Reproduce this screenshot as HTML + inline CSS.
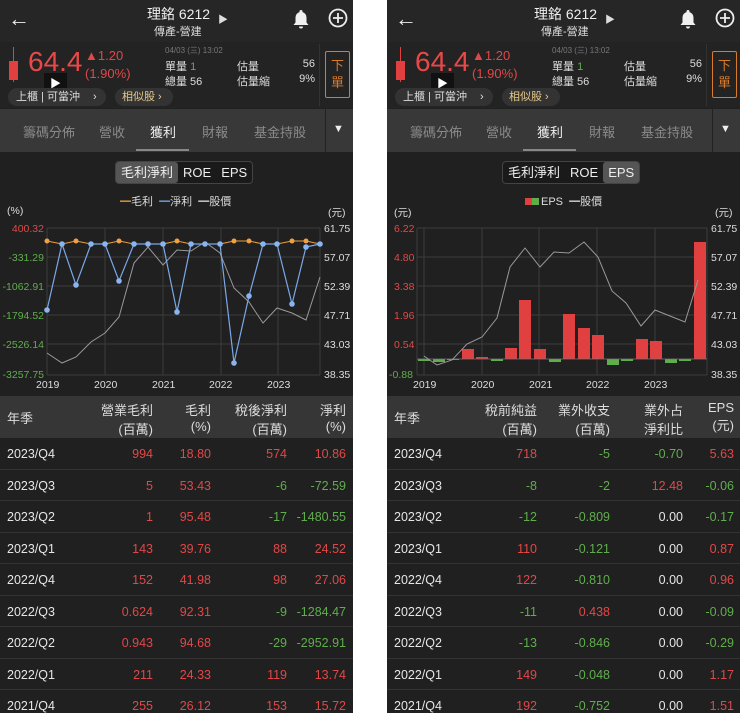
<!DOCTYPE html>
<html><head><meta charset="utf-8"><style>
*{margin:0;padding:0;box-sizing:border-box}
body{width:740px;height:713px;background:#fff;position:relative;overflow:hidden;font-family:"Liberation Sans","Noto Sans CJK TC",sans-serif;color:#ddd}
.ph{position:absolute;top:0;width:353px;height:713px;background:#202020;overflow:hidden}
.a{position:absolute;white-space:nowrap}
.top{position:absolute;left:0;top:0;width:353px;height:42px;background:#262626}
.quote{position:absolute;left:0;top:42px;width:353px;height:66px;background:#232323}
.tabs{position:absolute;left:0;top:109px;width:353px;height:43px;background:#383838}
.tabs span{position:absolute;top:13px;font-size:13px;color:#8a8a8a}
.seg{position:absolute;top:161px;height:23px;border:1px solid #444;border-radius:4px;background:#1a1a1a;font-size:13px;color:#eee}
.seg span{display:inline-block;height:21px;line-height:21px;padding:0 5px}
.seg .on{background:#555;border-radius:3px}
.th{position:absolute;left:0;top:396px;width:353px;height:42px;background:#363636;font-size:13px;color:#ddd}
.row{position:absolute;left:0;width:353px;height:31.5px;border-bottom:1px solid #333;font-size:12.5px}
.row span{position:absolute;top:9px}
.r{color:#e04848}.g{color:#5fae4c}.w{color:#e6e6e6}
.ax{font-size:10.5px;position:absolute}
</style></head><body>

<!-- LEFT PHONE -->
<div class="ph" style="left:0">
<div class="top"></div>
<div class="a" style="left:8px;top:6px;font-size:22px;color:#eee">←</div>
<div class="a" style="left:147px;top:4px;font-size:14px;color:#eee">理銘 6212</div>
<div class="a" style="left:218px;top:11px;font-size:10px;color:#ddd">▶</div>
<div class="a" style="left:154px;top:23px;font-size:11px;color:#ddd">傳產-營建</div>
<svg class="a" style="left:292px;top:9px" width="18" height="20" viewBox="0 0 18 20"><path d="M9 1a1.5 1.5 0 0 1 1.5 1.5v.6A5.5 5.5 0 0 1 14.5 8.5v5l2 2.5H1.5l2-2.5v-5A5.5 5.5 0 0 1 7.5 3.1v-.6A1.5 1.5 0 0 1 9 1zM7 17.5h4a2 2 0 0 1-4 0z" fill="#f0f0f0"/></svg>
<svg class="a" style="left:328px;top:8px" width="20" height="20" viewBox="0 0 20 20"><circle cx="10" cy="10" r="8.5" fill="none" stroke="#eee" stroke-width="1.8"/><path d="M10 5v10M5 10h10" stroke="#eee" stroke-width="1.8"/></svg>
<div class="quote"></div>
<div class="a" style="left:13px;top:47px;width:1px;height:35px;background:#e04040"></div>
<div class="a" style="left:9px;top:61px;width:9px;height:19px;background:#e04040"></div>
<div class="a r" style="left:28px;top:46px;font-size:28px;color:#e84848">64.4</div>
<div class="a" style="left:44px;top:73px;width:23px;height:22px;background:#111;color:#fff;font-size:11px;text-align:center;line-height:22px">▶</div>
<div class="a r" style="left:85px;top:48px;font-size:13px;color:#e04848">▲1.20</div>
<div class="a r" style="left:85px;top:66px;font-size:13px;color:#e04848">(1.90%)</div>
<div class="a" style="left:165px;top:45px;font-size:8px;color:#777">04/03 (三) 13:02</div>
<div class="a" style="left:165px;top:58px;font-size:11px;color:#ddd">單量 <span class="g">1</span></div>
<div class="a" style="left:165px;top:73px;font-size:11px;color:#ddd">總量 56</div>
<div class="a" style="left:237px;top:58px;font-size:11px">估量</div>
<div class="a" style="left:237px;top:73px;font-size:11px">估量縮</div>
<div class="a" style="left:300px;top:58px;font-size:11px;width:15px;text-align:right">56</div>
<div class="a" style="left:295px;top:73px;font-size:11px;width:20px;text-align:right">9%</div>
<div class="a" style="left:319px;top:44px;width:1px;height:62px;background:#333"></div>
<div class="a" style="left:325px;top:51px;width:25px;height:47px;border:1px solid #d87b2a;border-radius:2px;color:#d87b2a;font-size:13px;line-height:17px;text-align:center;padding-top:5px">下<br>單</div>
<div class="a" style="left:8px;top:88px;width:98px;height:18px;border-radius:9px;background:#333;font-size:11px;line-height:18px;padding-left:8px;color:#ddd">上櫃 | 可當沖 <span style="margin-left:10px">›</span></div>
<div class="a" style="left:115px;top:88px;width:58px;height:18px;border-radius:9px;background:#333;font-size:11px;line-height:18px;padding-left:7px;color:#e6c98a">相似股 ›</div>
<div class="tabs"><span style="left:23px">籌碼分佈</span><span style="left:99px">營收</span><span style="left:150px;color:#eee">獲利</span><span style="left:202px">財報</span><span style="left:254px">基金持股</span>
<div class="a" style="left:136px;top:40px;width:53px;height:2px;background:#888"></div>
<div class="a" style="left:325px;top:0;width:1px;height:43px;background:#222"></div>
<div class="a" style="left:333px;top:14px;font-size:11px;color:#eee">▼</div></div>
<div class="seg" style="left:115px"><span class="on">毛利淨利</span><span>ROE</span><span>EPS</span></div>
<div class="a" style="left:120px;top:193px;font-size:11px"><span style="color:#f0a040">━</span>毛利 &nbsp;<span style="color:#7aa8e8">━</span>淨利 &nbsp;<span style="color:#ddd">━</span>股價</div>
<div class="ax" style="left:7px;top:205px;color:#ddd">(%)</div>
<div class="ax" style="left:328px;top:205px;color:#ddd">(元)</div>
<svg class="a" style="left:0;top:220px" width="353" height="175">
<g stroke="#3c3c3c" stroke-width="1">
<line x1="47" y1="8" x2="320" y2="8"/><line x1="47" y1="37" x2="320" y2="37"/><line x1="47" y1="66" x2="320" y2="66"/><line x1="47" y1="95" x2="320" y2="95"/><line x1="47" y1="124" x2="320" y2="124"/><line x1="47" y1="155" x2="320" y2="155"/>
<line x1="47" y1="8" x2="47" y2="155"/><line x1="105" y1="8" x2="105" y2="155"/><line x1="163" y1="8" x2="163" y2="155"/><line x1="221" y1="8" x2="221" y2="155"/><line x1="278" y1="8" x2="278" y2="155"/><line x1="320" y1="8" x2="320" y2="155"/>
</g>
<polyline fill="none" stroke="#999" stroke-width="1" points="47,133 62,143 76,137 91,122 105,113 119,97 134,43 148,27 163,45 177,30 191,31 205,22 220,33 234,68 249,82 263,103 277,88 292,93 306,100 320,57"/>
<polyline fill="none" stroke="#e8a040" stroke-width="1" points="47,21 62,24 76,21 91,24 105,24 119,21 134,24 148,24 163,24 177,21 191,24 205,24 220,24 234,21 249,21 263,24 277,24 292,21 306,21 320,24"/>
<g fill="#f0a040"><circle cx="47" cy="21" r="2.5"/><circle cx="76" cy="21" r="2.5"/><circle cx="119" cy="21" r="2.5"/><circle cx="177" cy="21" r="2.5"/><circle cx="234" cy="21" r="2.5"/><circle cx="249" cy="21" r="2.5"/><circle cx="292" cy="21" r="2.5"/><circle cx="306" cy="21" r="2.5"/></g>
<polyline fill="none" stroke="#7aa8e8" stroke-width="1.2" points="47,90 62,24 76,65 91,24 105,24 119,61 134,24 148,24 163,24 177,92 191,24 205,24 220,24 234,143 249,76 263,24 277,24 292,84 306,27 320,24"/>
<g fill="#8ab4f0"><circle cx="47" cy="90" r="2.8"/><circle cx="62" cy="24" r="2.8"/><circle cx="76" cy="65" r="2.8"/><circle cx="91" cy="24" r="2.8"/><circle cx="105" cy="24" r="2.8"/><circle cx="119" cy="61" r="2.8"/><circle cx="134" cy="24" r="2.8"/><circle cx="148" cy="24" r="2.8"/><circle cx="163" cy="24" r="2.8"/><circle cx="177" cy="92" r="2.8"/><circle cx="191" cy="24" r="2.8"/><circle cx="205" cy="24" r="2.8"/><circle cx="220" cy="24" r="2.8"/><circle cx="234" cy="143" r="2.8"/><circle cx="249" cy="76" r="2.8"/><circle cx="263" cy="24" r="2.8"/><circle cx="277" cy="24" r="2.8"/><circle cx="292" cy="84" r="2.8"/><circle cx="306" cy="27" r="2.8"/><circle cx="320" cy="24" r="2.8"/></g>
</svg>
<div class="ax r" style="right:309px;top:223px">400.32</div>
<div class="ax g" style="right:309px;top:252px">-331.29</div>
<div class="ax g" style="right:309px;top:281px">-1062.91</div>
<div class="ax g" style="right:309px;top:310px">-1794.52</div>
<div class="ax g" style="right:309px;top:339px">-2526.14</div>
<div class="ax g" style="right:309px;top:369px">-3257.75</div>
<div class="ax" style="left:324px;top:223px">61.75</div><div class="ax" style="left:324px;top:252px">57.07</div><div class="ax" style="left:324px;top:281px">52.39</div><div class="ax" style="left:324px;top:310px">47.71</div><div class="ax" style="left:324px;top:339px">43.03</div><div class="ax" style="left:324px;top:369px">38.35</div>
<div class="ax" style="left:36px;top:379px">2019</div><div class="ax" style="left:94px;top:379px">2020</div><div class="ax" style="left:152px;top:379px">2021</div><div class="ax" style="left:209px;top:379px">2022</div><div class="ax" style="left:267px;top:379px">2023</div>
<div class="th"><span class="a" style="left:7px;top:12px">年季</span>
<span class="a" style="right:200px;top:4px;text-align:right">營業毛利<br>(百萬)</span>
<span class="a" style="right:142px;top:4px;text-align:right">毛利<br>(%)</span>
<span class="a" style="right:66px;top:4px;text-align:right">稅後淨利<br>(百萬)</span>
<span class="a" style="right:7px;top:4px;text-align:right">淨利<br>(%)</span></div>
<div class="row" style="top:438px"><span class="w" style="left:7px">2023/Q4</span><span class="r" style="right:200px">994</span><span class="r" style="right:142px">18.80</span><span class="r" style="right:66px">574</span><span class="r" style="right:7px">10.86</span></div>
<div class="row" style="top:469.5px"><span class="w" style="left:7px">2023/Q3</span><span class="r" style="right:200px">5</span><span class="r" style="right:142px">53.43</span><span class="g" style="right:66px">-6</span><span class="g" style="right:7px">-72.59</span></div>
<div class="row" style="top:501px"><span class="w" style="left:7px">2023/Q2</span><span class="r" style="right:200px">1</span><span class="r" style="right:142px">95.48</span><span class="g" style="right:66px">-17</span><span class="g" style="right:7px">-1480.55</span></div>
<div class="row" style="top:532.5px"><span class="w" style="left:7px">2023/Q1</span><span class="r" style="right:200px">143</span><span class="r" style="right:142px">39.76</span><span class="r" style="right:66px">88</span><span class="r" style="right:7px">24.52</span></div>
<div class="row" style="top:564px"><span class="w" style="left:7px">2022/Q4</span><span class="r" style="right:200px">152</span><span class="r" style="right:142px">41.98</span><span class="r" style="right:66px">98</span><span class="r" style="right:7px">27.06</span></div>
<div class="row" style="top:595.5px"><span class="w" style="left:7px">2022/Q3</span><span class="r" style="right:200px">0.624</span><span class="r" style="right:142px">92.31</span><span class="g" style="right:66px">-9</span><span class="g" style="right:7px">-1284.47</span></div>
<div class="row" style="top:627px"><span class="w" style="left:7px">2022/Q2</span><span class="r" style="right:200px">0.943</span><span class="r" style="right:142px">94.68</span><span class="g" style="right:66px">-29</span><span class="g" style="right:7px">-2952.91</span></div>
<div class="row" style="top:658.5px"><span class="w" style="left:7px">2022/Q1</span><span class="r" style="right:200px">211</span><span class="r" style="right:142px">24.33</span><span class="r" style="right:66px">119</span><span class="r" style="right:7px">13.74</span></div>
<div class="row" style="top:690px"><span class="w" style="left:7px">2021/Q4</span><span class="r" style="right:200px">255</span><span class="r" style="right:142px">26.12</span><span class="r" style="right:66px">153</span><span class="r" style="right:7px">15.72</span></div>
</div>

<!-- RIGHT PHONE -->
<div class="ph" style="left:387px">
<div class="top"></div>
<div class="a" style="left:8px;top:6px;font-size:22px;color:#eee">←</div>
<div class="a" style="left:147px;top:4px;font-size:14px;color:#eee">理銘 6212</div>
<div class="a" style="left:218px;top:11px;font-size:10px;color:#ddd">▶</div>
<div class="a" style="left:154px;top:23px;font-size:11px;color:#ddd">傳產-營建</div>
<svg class="a" style="left:292px;top:9px" width="18" height="20" viewBox="0 0 18 20"><path d="M9 1a1.5 1.5 0 0 1 1.5 1.5v.6A5.5 5.5 0 0 1 14.5 8.5v5l2 2.5H1.5l2-2.5v-5A5.5 5.5 0 0 1 7.5 3.1v-.6A1.5 1.5 0 0 1 9 1zM7 17.5h4a2 2 0 0 1-4 0z" fill="#f0f0f0"/></svg>
<svg class="a" style="left:328px;top:8px" width="20" height="20" viewBox="0 0 20 20"><circle cx="10" cy="10" r="8.5" fill="none" stroke="#eee" stroke-width="1.8"/><path d="M10 5v10M5 10h10" stroke="#eee" stroke-width="1.8"/></svg>
<div class="quote"></div>
<div class="a" style="left:13px;top:47px;width:1px;height:35px;background:#e04040"></div>
<div class="a" style="left:9px;top:61px;width:9px;height:19px;background:#e04040"></div>
<div class="a r" style="left:28px;top:46px;font-size:28px;color:#e84848">64.4</div>
<div class="a" style="left:44px;top:73px;width:23px;height:22px;background:#111;color:#fff;font-size:11px;text-align:center;line-height:22px">▶</div>
<div class="a r" style="left:85px;top:48px;font-size:13px;color:#e04848">▲1.20</div>
<div class="a r" style="left:85px;top:66px;font-size:13px;color:#e04848">(1.90%)</div>
<div class="a" style="left:165px;top:45px;font-size:8px;color:#777">04/03 (三) 13:02</div>
<div class="a" style="left:165px;top:58px;font-size:11px;color:#ddd">單量 <span class="g">1</span></div>
<div class="a" style="left:165px;top:73px;font-size:11px;color:#ddd">總量 56</div>
<div class="a" style="left:237px;top:58px;font-size:11px">估量</div>
<div class="a" style="left:237px;top:73px;font-size:11px">估量縮</div>
<div class="a" style="left:300px;top:58px;font-size:11px;width:15px;text-align:right">56</div>
<div class="a" style="left:295px;top:73px;font-size:11px;width:20px;text-align:right">9%</div>
<div class="a" style="left:319px;top:44px;width:1px;height:62px;background:#333"></div>
<div class="a" style="left:325px;top:51px;width:25px;height:47px;border:1px solid #d87b2a;border-radius:2px;color:#d87b2a;font-size:13px;line-height:17px;text-align:center;padding-top:5px">下<br>單</div>
<div class="a" style="left:8px;top:88px;width:98px;height:18px;border-radius:9px;background:#333;font-size:11px;line-height:18px;padding-left:8px;color:#ddd">上櫃 | 可當沖 <span style="margin-left:10px">›</span></div>
<div class="a" style="left:115px;top:88px;width:58px;height:18px;border-radius:9px;background:#333;font-size:11px;line-height:18px;padding-left:7px;color:#e6c98a">相似股 ›</div>
<div class="tabs"><span style="left:23px">籌碼分佈</span><span style="left:99px">營收</span><span style="left:150px;color:#eee">獲利</span><span style="left:202px">財報</span><span style="left:254px">基金持股</span>
<div class="a" style="left:136px;top:40px;width:53px;height:2px;background:#888"></div>
<div class="a" style="left:325px;top:0;width:1px;height:43px;background:#222"></div>
<div class="a" style="left:333px;top:14px;font-size:11px;color:#eee">▼</div></div>
<div class="seg" style="left:115px"><span>毛利淨利</span><span>ROE</span><span class="on">EPS</span></div>
<div class="a" style="left:138px;top:193px;font-size:11px"><span style="display:inline-block;width:7px;height:7px;background:#e04040"></span><span style="display:inline-block;width:7px;height:7px;background:#5fae4c;margin-right:2px"></span>EPS &nbsp;<span style="color:#ddd">━</span>股價</div>
<div class="ax" style="left:7px;top:205px">(元)</div>
<div class="ax" style="left:328px;top:205px">(元)</div>
<svg class="a" style="left:0;top:220px" width="353" height="175">
<g stroke="#3c3c3c" stroke-width="1">
<line x1="30" y1="8" x2="320" y2="8"/><line x1="30" y1="37" x2="320" y2="37"/><line x1="30" y1="66" x2="320" y2="66"/><line x1="30" y1="95" x2="320" y2="95"/><line x1="30" y1="124" x2="320" y2="124"/><line x1="30" y1="155" x2="320" y2="155"/>
<line x1="30" y1="8" x2="30" y2="155"/><line x1="37" y1="8" x2="37" y2="155"/><line x1="95" y1="8" x2="95" y2="155"/><line x1="152" y1="8" x2="152" y2="155"/><line x1="210" y1="8" x2="210" y2="155"/><line x1="268" y1="8" x2="268" y2="155"/><line x1="320" y1="8" x2="320" y2="155"/>
</g>
<g fill="#e04040">
<rect x="75" y="129" width="12" height="10"/><rect x="89" y="137" width="12" height="2"/><rect x="118" y="128" width="12" height="11"/><rect x="132" y="80" width="12" height="59"/><rect x="147" y="129" width="12" height="10"/><rect x="176" y="94" width="12" height="45"/><rect x="191" y="108" width="12" height="31"/><rect x="205" y="115" width="12" height="24"/><rect x="249" y="119" width="12" height="20"/><rect x="263" y="121" width="12" height="18"/><rect x="307" y="22" width="12" height="117"/>
</g>
<g fill="#5fae4c">
<rect x="31" y="139" width="12" height="2"/><rect x="46" y="139" width="12" height="3"/><rect x="60" y="139" width="12" height="1"/><rect x="104" y="139" width="12" height="2"/><rect x="162" y="139" width="12" height="3"/><rect x="220" y="139" width="12" height="6"/><rect x="234" y="139" width="12" height="2"/><rect x="278" y="139" width="12" height="4"/><rect x="292" y="139" width="12" height="2"/>
</g>
<line x1="30" y1="139" x2="320" y2="139" stroke="#777" stroke-width="0.8"/>
<polyline fill="none" stroke="#999" stroke-width="1" points="37,136 50,145 65,140 80,124 95,117 110,98 123,47 138,28 153,47 167,32 182,33 197,22 211,37 225,71 239,83 254,106 268,90 283,96 298,102 311,60"/>
</svg>
<div class="ax r" style="left:7px;top:223px">6.22</div>
<div class="ax r" style="left:7px;top:252px">4.80</div>
<div class="ax r" style="left:7px;top:281px">3.38</div>
<div class="ax r" style="left:7px;top:310px">1.96</div>
<div class="ax r" style="left:7px;top:339px">0.54</div>
<div class="ax g" style="left:2px;top:369px">-0.88</div>
<div class="ax" style="left:324px;top:223px">61.75</div><div class="ax" style="left:324px;top:252px">57.07</div><div class="ax" style="left:324px;top:281px">52.39</div><div class="ax" style="left:324px;top:310px">47.71</div><div class="ax" style="left:324px;top:339px">43.03</div><div class="ax" style="left:324px;top:369px">38.35</div>
<div class="ax" style="left:26px;top:379px">2019</div><div class="ax" style="left:84px;top:379px">2020</div><div class="ax" style="left:142px;top:379px">2021</div><div class="ax" style="left:199px;top:379px">2022</div><div class="ax" style="left:257px;top:379px">2023</div>
<div class="th"><span class="a" style="left:7px;top:12px">年季</span>
<span class="a" style="right:203px;top:4px;text-align:right">稅前純益<br>(百萬)</span>
<span class="a" style="right:130px;top:4px;text-align:right">業外收支<br>(百萬)</span>
<span class="a" style="right:57px;top:4px;text-align:right">業外占<br>淨利比</span>
<span class="a" style="right:6px;top:4px;text-align:right">EPS<br>(元)</span></div>
<div class="row" style="top:438px"><span class="w" style="left:7px">2023/Q4</span><span class="r" style="right:203px">718</span><span class="g" style="right:130px">-5</span><span class="g" style="right:57px">-0.70</span><span class="r" style="right:6px">5.63</span></div>
<div class="row" style="top:469.5px"><span class="w" style="left:7px">2023/Q3</span><span class="g" style="right:203px">-8</span><span class="g" style="right:130px">-2</span><span class="r" style="right:57px">12.48</span><span class="g" style="right:6px">-0.06</span></div>
<div class="row" style="top:501px"><span class="w" style="left:7px">2023/Q2</span><span class="g" style="right:203px">-12</span><span class="g" style="right:130px">-0.809</span><span class="w" style="right:57px">0.00</span><span class="g" style="right:6px">-0.17</span></div>
<div class="row" style="top:532.5px"><span class="w" style="left:7px">2023/Q1</span><span class="r" style="right:203px">110</span><span class="g" style="right:130px">-0.121</span><span class="w" style="right:57px">0.00</span><span class="r" style="right:6px">0.87</span></div>
<div class="row" style="top:564px"><span class="w" style="left:7px">2022/Q4</span><span class="r" style="right:203px">122</span><span class="g" style="right:130px">-0.810</span><span class="w" style="right:57px">0.00</span><span class="r" style="right:6px">0.96</span></div>
<div class="row" style="top:595.5px"><span class="w" style="left:7px">2022/Q3</span><span class="g" style="right:203px">-11</span><span class="r" style="right:130px">0.438</span><span class="w" style="right:57px">0.00</span><span class="g" style="right:6px">-0.09</span></div>
<div class="row" style="top:627px"><span class="w" style="left:7px">2022/Q2</span><span class="g" style="right:203px">-13</span><span class="g" style="right:130px">-0.846</span><span class="w" style="right:57px">0.00</span><span class="g" style="right:6px">-0.29</span></div>
<div class="row" style="top:658.5px"><span class="w" style="left:7px">2022/Q1</span><span class="r" style="right:203px">149</span><span class="g" style="right:130px">-0.048</span><span class="w" style="right:57px">0.00</span><span class="r" style="right:6px">1.17</span></div>
<div class="row" style="top:690px"><span class="w" style="left:7px">2021/Q4</span><span class="r" style="right:203px">192</span><span class="g" style="right:130px">-0.752</span><span class="w" style="right:57px">0.00</span><span class="r" style="right:6px">1.51</span></div>
</div>
</body></html>
